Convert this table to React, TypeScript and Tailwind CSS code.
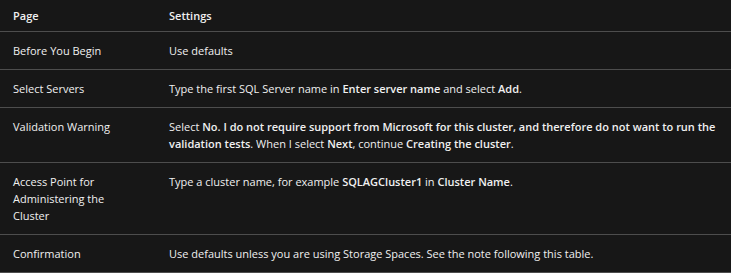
import React from "react";

const rows: { page: React.ReactNode; settings: React.ReactNode }[] = [
  { page: "Before You Begin", settings: "Use defaults" },
  {
    page: "Select Servers",
    settings: (
      <>
        Type the first SQL Server name in <b className="font-semibold">Enter server name</b> and select{" "}
        <b className="font-semibold">Add</b>.
      </>
    ),
  },
  {
    page: "Validation Warning",
    settings: (
      <>
        Select <b className="font-semibold">No. I do not require support from Microsoft for this cluster, and therefore do not want to run the validation tests</b>. When I select <b className="font-semibold">Next</b>, continue <b className="font-semibold">Creating the cluster</b>.
      </>
    ),
  },
  {
    page: "Access Point for Administering the Cluster",
    settings: (
      <>
        Type a cluster name, for example <b className="font-semibold">SQLAGCluster1</b> in{" "}
        <b className="font-semibold">Cluster Name</b>.
      </>
    ),
  },
  {
    page: "Confirmation",
    settings: "Use defaults unless you are using Storage Spaces. See the note following this table.",
  },
];

export default function App() {
  return (
    <div className="w-[731px] h-[273px] overflow-hidden bg-[#171717] text-[#f0f0f0] text-[11px] leading-[17px] font-['Open_Sans',sans-serif]">
      <table className="w-full border-collapse table-fixed">
        <colgroup>
          <col className="w-[156px]" />
          <col />
        </colgroup>
        <thead>
          <tr className="border-b border-[#4d4d4d]">
            <th className="text-left font-semibold pl-[13px] pr-[13px] pt-[7px] pb-[7px] align-top">Page</th>
            <th className="text-left font-semibold pl-[13px] pr-[13px] pt-[7px] pb-[7px] align-top">Settings</th>
          </tr>
        </thead>
        <tbody>
          {rows.map((r, i) => (
            <tr key={i} className="border-b border-[#4d4d4d]">
              <td className="align-top pl-[13px] pr-[13px] pt-[10px] pb-[10px]">{r.page}</td>
              <td className="align-top pl-[13px] pr-[13px] pt-[10px] pb-[10px]">{r.settings}</td>
            </tr>
          ))}
        </tbody>
      </table>
    </div>
  );
}
